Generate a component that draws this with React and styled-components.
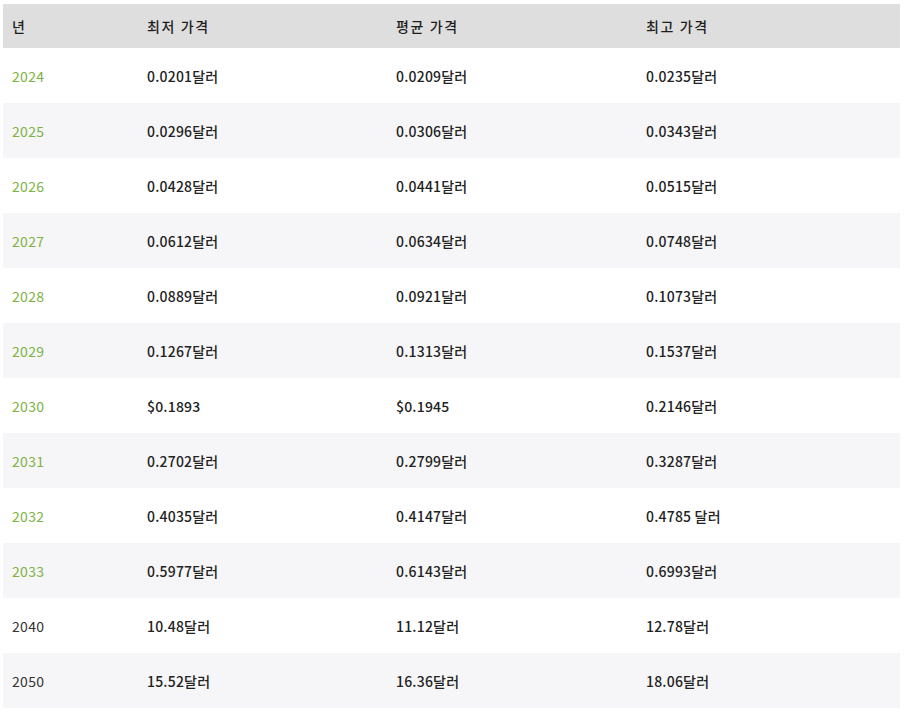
import React from "react";
import styled, { createGlobalStyle } from "styled-components";

const Global = createGlobalStyle`
  html, body { margin: 0; padding: 0; background: #ffffff; }
  body { font-family: "Noto Sans CJK KR", "Open Sans", sans-serif; }
`;

const Wrap = styled.div`
  padding: 4px 6px 0 3px;
`;

const Table = styled.div`
  display: grid;
  grid-template-columns: 135px 249px 250px 1fr;
  width: 897px;
`;

const Row = styled.div`
  display: contents;
`;

const HeadCell = styled.div`
  background: #dedede;
  height: 44px;
  display: flex;
  align-items: center;
  padding-left: 9px;
  font-size: 14px;
  font-weight: 500;
  color: #1e1e1e;
  letter-spacing: 1.6px;
`;

const Cell = styled.div`
  background: ${(p) => (p.$alt ? "#f6f6f8" : "#ffffff")};
  height: 55px;
  display: flex;
  align-items: center;
  padding-left: 9px;
  font-size: 14px;
  font-weight: ${(p) => (p.$year ? 400 : 500)};
  color: ${(p) => (p.$green ? "#7cb342" : p.$year ? "#333" : "#222")};
  letter-spacing: ${(p) => (p.$year ? "0.3px" : "0.2px")};
  white-space: pre;
`;

const rows = [
  ["2024", "0.0201달러", "0.0209달러", "0.0235달러", true],
  ["2025", "0.0296달러", "0.0306달러", "0.0343달러", true],
  ["2026", "0.0428달러", "0.0441달러", "0.0515달러", true],
  ["2027", "0.0612달러", "0.0634달러", "0.0748달러", true],
  ["2028", "0.0889달러", "0.0921달러", "0.1073달러", true],
  ["2029", "0.1267달러", "0.1313달러", "0.1537달러", true],
  ["2030", "$0.1893", "$0.1945", "0.2146달러", true],
  ["2031", "0.2702달러", "0.2799달러", "0.3287달러", true],
  ["2032", "0.4035달러", "0.4147달러", "0.4785 달러", true],
  ["2033", "0.5977달러", "0.6143달러", "0.6993달러", true],
  ["2040", "10.48달러", "11.12달러", "12.78달러", false],
  ["2050", "15.52달러", "16.36달러", "18.06달러", false],
];

export default function App() {
  return (
    <Wrap>
      <Global />
      <Table>
        <Row>
          <HeadCell>년</HeadCell>
          <HeadCell>최저 가격</HeadCell>
          <HeadCell>평균 가격</HeadCell>
          <HeadCell>최고 가격</HeadCell>
        </Row>
        {rows.map(([y, a, b, c, g], i) => (
          <Row key={y}>
            <Cell $alt={i % 2 === 1} $year $green={g}>{y}</Cell>
            <Cell $alt={i % 2 === 1}>{a}</Cell>
            <Cell $alt={i % 2 === 1}>{b}</Cell>
            <Cell $alt={i % 2 === 1}>{c}</Cell>
          </Row>
        ))}
      </Table>
    </Wrap>
  );
}
